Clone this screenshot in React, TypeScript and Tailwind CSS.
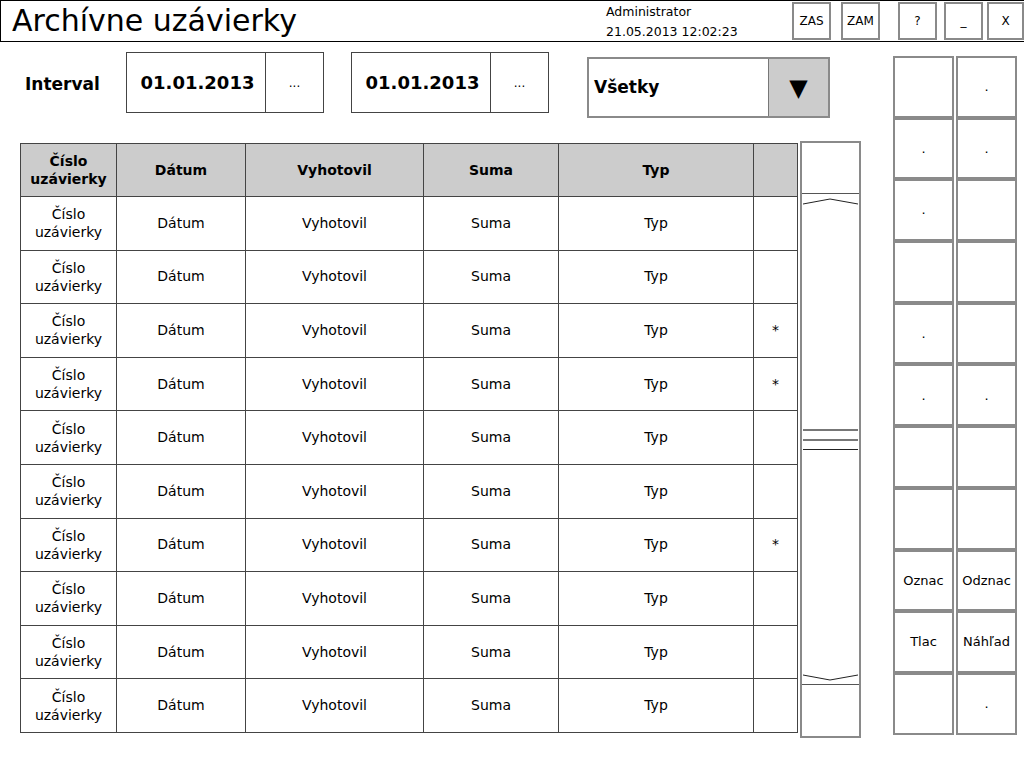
import React from 'react';

const rows = [false, false, true, true, false, false, true, false, false, false];

// dots that appear in the right button grid, [col1, col2] per row
const sideCells: [string, string][] = [
  ['', '.'],
  ['.', '.'],
  ['.', ''],
  ['', ''],
  ['.', ''],
  ['.', '.'],
  ['', ''],
  ['', ''],
  ['Oznac', 'Odznac'],
  ['Tlac', 'Náhľad'],
  ['', '.'],
];

const HeaderButton: React.FC<{ label: string; w: string }> = ({ label, w }) => (
  <div className={`${w} h-[38px] border-2 border-[#8a8a8a] bg-white flex items-center justify-center text-[12px] text-black`}>
    {label}
  </div>
);

const DateBox: React.FC = () => (
  <div className="flex w-[198px] h-[61px] border border-[#444] bg-white">
    <div className="w-[138px] flex items-center justify-center font-bold text-[18px] pl-[3px]">01.01.2013</div>
    <div className="flex-1 border-l border-[#444] flex items-center justify-center text-[12px]">...</div>
  </div>
);

const App: React.FC = () => {
  return (
    <div className="w-[1024px] h-[768px] bg-white text-black overflow-hidden" style={{ fontFamily: '"DejaVu Sans", Verdana, sans-serif' }}>
      {/* header bar */}
      <div className="h-[42px] border border-black border-r-0 flex items-center">
        <div className="pl-[11px] text-[30px] leading-none w-[605px]">Archívne uzávierky</div>
        <div className="w-[186px] text-[12.5px] leading-[20px] pt-[1px]">
          <div>Administrator</div>
          <div>21.05.2013 12:02:23</div>
        </div>
        <div className="flex items-center">
          <HeaderButton label="ZAS" w="w-[39px]" />
          <div className="w-[10px]" />
          <HeaderButton label="ZAM" w="w-[39px]" />
          <div className="w-[18px]" />
          <HeaderButton label="?" w="w-[39px]" />
          <div className="w-[7px]" />
          <div className="w-[39px] h-[38px] border-2 border-[#8a8a8a] flex items-end justify-center pb-[8px] text-[12px]">_</div>
          <div className="w-[4px]" />
          <HeaderButton label="X" w="w-[37px]" />
        </div>
      </div>

      <div className="flex">
        {/* left area */}
        <div className="w-[893px]">
          <div className="flex items-start pt-[10px]">
            <div className="w-[126px] pl-[25px] pt-[20px] font-bold text-[17px]">Interval</div>
            <DateBox />
            <div className="w-[27px]" />
            <DateBox />
            <div className="w-[38px]" />
            <div className="mt-[5px] flex w-[243px] h-[61px] border-2 border-[#8a8a8a] bg-white">
              <div className="flex-1 flex items-center pl-[5px] font-bold text-[17px]">Všetky</div>
              <div className="w-[60px] bg-[#cccccc] border-l border-[#777] flex items-center justify-center text-[24px]">▼</div>
            </div>
          </div>

          <div className="flex items-start mt-[25px] pl-[20px]">
            <table className="border-collapse text-[14px] text-center">
              <thead>
                <tr className="bg-[#cccccc] h-[53px] font-bold">
                  <th className="w-[96px] border border-[#444] leading-[18px]">Číslo<br />uzávierky</th>
                  <th className="w-[129px] border border-[#444]">Dátum</th>
                  <th className="w-[178px] border border-[#444]">Vyhotovil</th>
                  <th className="w-[135px] border border-[#444]">Suma</th>
                  <th className="w-[195px] border border-[#444]">Typ</th>
                  <th className="w-[44px] border border-[#444]"></th>
                </tr>
              </thead>
              <tbody>
                {rows.map((star, i) => (
                  <tr key={i} className="h-[53.6px]">
                    <td className="border border-[#444] leading-[18px]">Číslo<br />uzávierky</td>
                    <td className="border border-[#444]">Dátum</td>
                    <td className="border border-[#444]">Vyhotovil</td>
                    <td className="border border-[#444]">Suma</td>
                    <td className="border border-[#444]">Typ</td>
                    <td className="border border-[#444]">{star ? '*' : ''}</td>
                  </tr>
                ))}
              </tbody>
            </table>

            {/* scrollbar */}
            <div className="ml-[2px] -mt-[2px] w-[61px] h-[597px] border-2 border-[#8a8a8a] flex flex-col">
              <div className="h-[51px] border-b border-[#555]" />
              <div className="flex-1 relative">
                <svg className="absolute left-0 top-[3px]" width="57" height="10" viewBox="0 0 57 10">
                  <polyline points="1,7 28,2 56,7" fill="none" stroke="#222" strokeWidth="1" />
                </svg>
                <div className="absolute left-[1px] right-[1px] top-[235px] h-[2px] bg-[#777]" />
                <div className="absolute left-[1px] right-[1px] top-[245px] h-[2px] bg-[#777]" />
                <div className="absolute left-[1px] right-[1px] top-[255px] h-[1px] bg-[#222]" />
                <svg className="absolute left-0 bottom-[1px]" width="57" height="10" viewBox="0 0 57 10">
                  <polyline points="1,2 28,7 56,2" fill="none" stroke="#222" strokeWidth="1" />
                </svg>
              </div>
              <div className="h-[52px] border-t border-[#555]" />
            </div>
          </div>
        </div>

        {/* right button grid */}
        <div className="pt-[14px] grid grid-cols-[61px_61px] gap-x-[2px] auto-rows-[61.7px]">
          {sideCells.map(([a, b], i) => (
            <React.Fragment key={i}>
              <div className="border-2 border-[#8a8a8a] flex items-center justify-center text-[13px]">{a}</div>
              <div className="border-2 border-[#8a8a8a] flex items-center justify-center text-[13px]">{b}</div>
            </React.Fragment>
          ))}
        </div>
      </div>
    </div>
  );
};

export default App;
